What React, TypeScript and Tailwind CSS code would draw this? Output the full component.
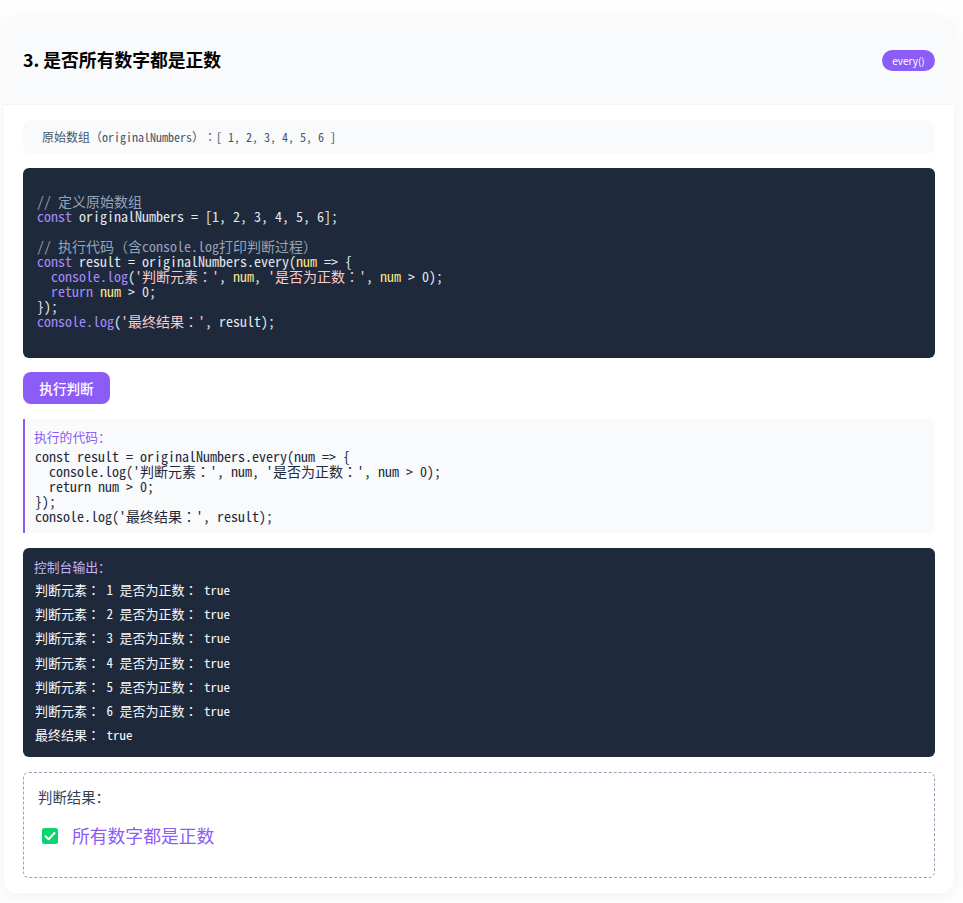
import React from "react";

const mono = "font-['Noto_Sans_Mono_CJK_SC','Liberation_Mono','Noto_Sans_CJK_SC',monospace] [text-spacing-trim:space-all]";
const sans = "font-['Noto_Sans_CJK_SC','Noto_Sans',sans-serif]";

const Q = () => <span className="font-['Noto_Sans_Mono_CJK_TC','Noto_Sans_CJK_TC',monospace]">：</span>;
const K = ({ children }: { children: string }) => <span className="text-[#a78bfa]">{children}</span>;
const N = ({ children }: { children: string }) => <span className="text-[#fde68a]">{children}</span>;
const S = ({ children }: { children: React.ReactNode }) => <span className="text-[#fecaca]">{children}</span>;
const C = ({ children }: { children: string }) => <span className="text-[#94a3b8]">{children}</span>;

const nums = [1, 2, 3, 4, 5, 6];

export default function App() {
  return (
    <div className={`min-h-[903px] bg-[#fefefe] px-[4px] pt-[17px] ${sans}`}>
      <div className="w-[950px] h-[876px] rounded-xl bg-white overflow-hidden shadow-[0_4px_16px_rgba(0,0,0,0.05)]">
        <div className="h-[88px] flex items-center justify-between px-[19px] bg-[#f9fafb] border-b border-[#f3f4f6]">
          <h2 className="mb-[2px] text-[17.8px] font-bold text-black">3. 是否所有数字都是正数</h2>
          <span className="h-[21px] w-[53px] flex items-center justify-center rounded-full bg-[#8b5cf6] text-[10px] text-white">every()</span>
        </div>
        <div className="px-[19px] pt-[15px] flex flex-col">
          <div className={`h-[34px] flex items-center whitespace-pre pl-[19px] rounded-lg bg-[#f9fafb] text-xs text-[#475569] ${mono}`}>
            <span>原始数组（originalNumbers）<Q />[ 1, 2, 3, 4, 5, 6 ]</span>
          </div>
          <pre className={`mt-[14px] h-[190px] rounded-md bg-[#1e293b] pt-[26px] pl-[14px] text-sm leading-[15px] text-[#e2e8f0] ${mono}`}>
            <C>{"// 定义原始数组"}</C>{"\n"}
            <K>const</K>{" originalNumbers = [1, 2, 3, 4, 5, 6];\n\n"}
            <C>{"// 执行代码（含console.log打印判断过程）"}</C>{"\n"}
            <K>const</K>{" result = originalNumbers.every("}<N>num</N>{" => {\n  "}
            <K>console.log</K>{"("}<S>'判断元素<Q />'</S>{", "}<N>num</N>{", "}<S>'是否为正数<Q />'</S>{", "}<N>num</N>{" > 0);\n  "}
            <K>return</K>{" "}<N>num</N>{" > 0;\n});\n"}
            <K>console.log</K>{"("}<S>'最终结果<Q />'</S>{", result);"}
          </pre>
          <button className="mt-[14px] h-[32px] w-[87px] rounded-lg bg-[#8b5cf6] text-[13.6px] font-medium text-white">执行判断</button>
          <div className="mt-[15px] h-[114px] rounded-r-md border-l-[2px] border-[#8b5cf6] bg-[#f9fafb] pl-[9px] pt-[9px]">
            <div className="text-[12.8px] leading-[18px] text-[#8b5cf6]">执行的代码：</div>
            <pre className={`mt-[3px] pl-[1px] text-[14px] leading-[15px] text-[#1e293b] ${mono}`}>
              {"const result = originalNumbers.every(num => {\n  console.log('判断元素"}<Q />{"', num, '是否为正数"}<Q />{"', num > 0);\n  return num > 0;\n});\nconsole.log('最终结果"}<Q />{"', result);"}
            </pre>
          </div>
          <div className="mt-[15px] h-[209px] rounded-md bg-[#1e293b] pl-[11px] pt-[10px] text-white">
            <div className="text-[12.8px] leading-[18px] text-[#c4b5fd]">控制台输出：</div>
            <div className={`mt-[2px] pl-[1px] text-[13px] leading-[24.2px] text-[#f8fafc] whitespace-pre ${mono}`}>
              {nums.map((n) => <div key={n}>判断元素<Q /> {n} 是否为正数<Q /> true</div>)}
              <div>最终结果<Q /> true</div>
            </div>
          </div>
          <div className="mt-[15px] h-[106px] rounded-md border border-dashed border-[#94a3b8] px-[14px] pt-[14px]">
            <div className="text-[14.4px] leading-[20px] text-[#334155]">判断结果：</div>
            <div className="mt-[17px] flex items-center h-[24px] pl-[4px]">
              <svg width="16" height="16" viewBox="0 0 16 16" aria-hidden="true">
                <rect width="16" height="16" rx="2.5" fill="#06d66f" />
                <path d="M3.5 8.2 6.7 11.2 12.5 5" fill="none" stroke="#fff" strokeWidth="2" strokeLinecap="round" strokeLinejoin="round" />
              </svg>
              <span className="ml-[14px] mb-[2px] text-[17.8px] leading-[24px] text-[#8b5cf6]">所有数字都是正数</span>
            </div>
          </div>
        </div>
      </div>
    </div>
  );
}
